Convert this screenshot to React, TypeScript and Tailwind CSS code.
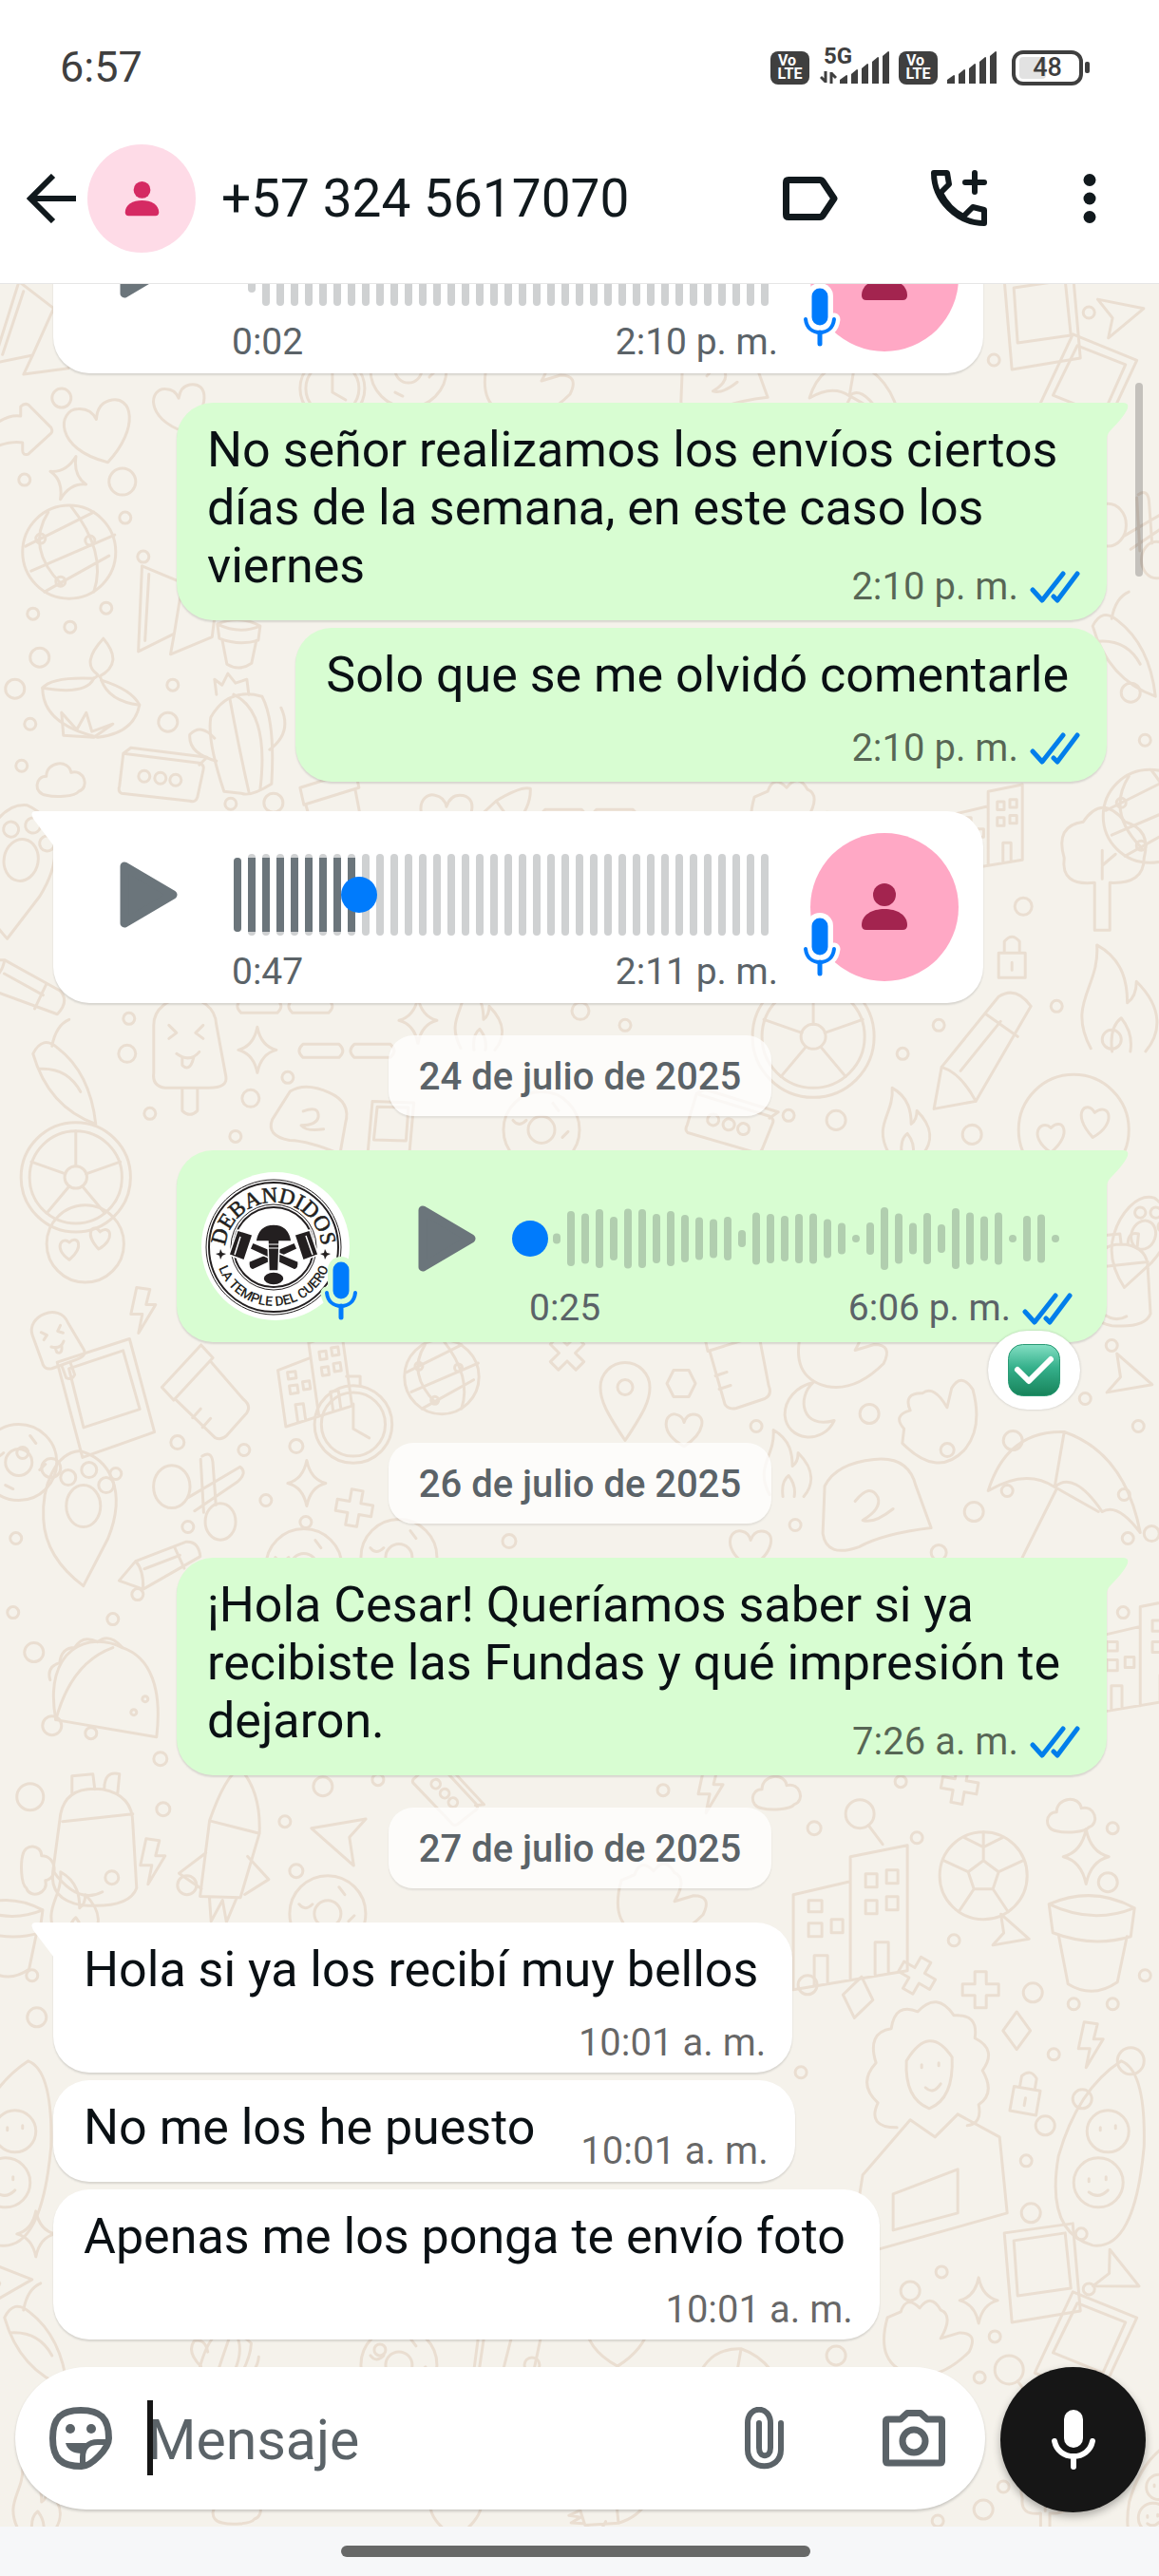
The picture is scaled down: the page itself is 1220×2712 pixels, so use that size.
import React from "react";

type Side = "in" | "out";

interface VoiceNote {
  side: Side;
  duration: string;
  time: string;
  progress: number;
  bars: number[];
  tail?: boolean;
}

const LINE = "#eaded1";

// Bar heights of the three voice notes
const flatBars = Array.from({ length: 36 }, () => 86);
const firstBars = [8, 58, ...flatBars];
const secondBars = [78, 86, ...flatBars];
const replyBars = [
  8, 8, 11, 58, 53, 62, 46, 63, 62, 52, 58, 50, 45, 41, 46, 18, 55, 52, 48, 52,
  53, 41, 33, 8, 34, 66, 53, 33, 54, 30, 64, 55, 47, 55, 8, 48, 51, 8,
];

/* ---------- Icons ---------- */

function Ticks() {
  return (
    <svg width="53" height="34" viewBox="0 0 53 34" fill="none" stroke="#027eeb" strokeWidth="5" strokeLinecap="round" strokeLinejoin="round">
      <path d="M3 20 13 31 35 3" />
      <path d="M25 27 29 31 50 3" />
    </svg>
  );
}

function Tail({ side }: { side: Side }) {
  return side === "out" ? (
    <svg className="absolute top-0 -right-[23px]" width="24" height="38" viewBox="0 0 24 38">
      <path d="M0 0H18Q26 0 22 8Q18 16 6 28Q1 33 1 38H0Z" fill="#d8fdd2" />
    </svg>
  ) : (
    <svg className="absolute top-0 -left-[23px]" width="24" height="38" viewBox="0 0 24 38">
      <path d="M24 0H5Q-2 0 2 8L24 37Z" fill="#fff" />
    </svg>
  );
}

function PlayIcon() {
  return (
    <svg width="61" height="70" viewBox="0 0 61 70">
      <path d="M5 5 56 35 5 65Z" fill="#6b757b" stroke="#6b757b" strokeWidth="9" strokeLinejoin="round" />
    </svg>
  );
}

function VoiceMic({ halo }: { halo: string }) {
  return (
    <svg width="48" height="74" viewBox="-6 -6 48 74" fill="none" strokeLinecap="round">
      <g stroke={halo}>
        <path d="M18 9V31" strokeWidth="28" />
        <path d="M3 33C4 42 10 47 18 47S32 42 33 33" strokeWidth="13" />
      </g>
      <g stroke="#007bfc">
        <path d="M18 9V31" strokeWidth="17" />
        <path d="M3 33C4 42 10 47 18 47S32 42 33 33" strokeWidth="4" />
        <path d="M18 47V59" strokeWidth="5" />
      </g>
    </svg>
  );
}

function Person({ className, width, height }: { className: string; width: number; height: number }) {
  return (
    <svg className={className} width={width} height={height} viewBox="0 0 48 50" fill="currentColor">
      <circle cx="24" cy="12" r="12" />
      <path d="M0 44C0 33 11 27 24 27S48 33 48 44Q48 49 43 49H5Q0 49 0 44Z" />
    </svg>
  );
}

function BrandLogo() {
  return (
    <svg width="156" height="156" viewBox="0 0 156 156">
      <defs>
        <path id="arcTop" d="M25 83A51 51 0 1 1 127 83" />
        <path id="arcBottom" d="M15 90A62 62 0 0 0 137 90" />
      </defs>
      <circle cx="78" cy="78" r="78" fill="#fff" />
      <g fill="none" stroke="#231f20">
        <circle cx="76" cy="79" r="71" strokeWidth="1" />
        <circle cx="76" cy="79" r="68" strokeWidth="2" />
        <circle cx="76" cy="79" r="45" strokeWidth="1" />
        <circle cx="76" cy="79" r="42" strokeWidth="2" />
      </g>
      <g fill="#231f20" textAnchor="middle">
        <text className="font-['Liberation_Serif']" fontSize="23" stroke="#231f20" strokeWidth="0.6">
          <textPath href="#arcTop" startOffset="50%">DEBANDIDOS</textPath>
        </text>
        <text className="font-['Roboto'] font-medium" fontSize="14">
          <textPath href="#arcBottom" startOffset="50%">LA TEMPLE DEL CUERO</textPath>
        </text>
      </g>
      <path d="M20 81l2 4 4 1-4 2-2 4-1-4-4-2 4-1zM130 81l2 4 4 1-4 2-2 4-1-4-4-2 4-1z" fill="#231f20" />
      {/* crossed mallets behind the trimming knife */}
      <g fill="#231f20" stroke="#fff" strokeWidth="1.5">
        <path d="M50 94 98 74l3 7-47 22q-5-1-4-9Z" />
        <path d="M102 94 54 74l-3 7 47 22q5-1 4-9Z" />
        <path d="M38 61 54 66 45 93 29 87Z" />
        <path d="M114 61 98 66 107 93 123 87Z" />
        <path d="M57 73C59 60 67 55 76 55S93 60 95 73H82L81 104H71L70 73Z" />
        <ellipse cx="76" cy="112" rx="11" ry="7" />
      </g>
      <path d="M41 68 35 87M110 67 117 87" stroke="#fff" strokeWidth="1.5" />
      <path d="M70 76H82M71 80H81" stroke="#fff" strokeWidth="1" />
    </svg>
  );
}

function VolteBadge() {
  return (
    <span className="flex h-[35px] w-[41px] flex-col items-center justify-center rounded-[8px] bg-[#3f3f3f] text-[16px] leading-[14px] font-bold text-white">
      <span className="pr-1.5">Vo</span>
      <span>LTE</span>
    </span>
  );
}

function SignalBars() {
  return (
    <svg width="53" height="34" viewBox="0 0 53 34" fill="#3f3f3f">
      {[9, 15, 21, 28, 34].map((h, i) => (
        <path key={h} d={`M${i * 11 + (i ? 1 : 0)} ${34 - h + 5}L${i * 11 + 7} ${34 - h}q1 0 1 1V34h-${i ? 7 : 8}z`} />
      ))}
    </svg>
  );
}

/* ---------- Wallpaper ---------- */

const motifs: Record<string, React.ReactNode> = {
  sparkle: <path d="M0-24Q4-4 20 0Q4 4 0 24Q-4 4-20 0Q-4-4 0-24Z" />,
  plus: <path d="M-6-19H6V-6H19V6H6V19H-6V6H-19V-6H-6Z" />,
  cloud: <path d="M-16 16C-30 14-28-4-16-4C-16-20 8-22 10-8C24-12 30 8 18 12C14 18-8 18-16 16Z" />,
  bolt: <path d="M-6-24 8-22 4-6 14-6-4 24 0 4-12 4Z" />,
  diamond: <path d="M0-22 16 0 0 22-16 0Z" />,
  plane: <path d="M-22-18 24 0-18 24-10 4Z" />,
  arrow: <path d="M-30-8Q-16-18-4-16V-26Q0-30 4-28L28-4Q30 0 28 2L4 24Q-2 26-2 20V12Q-14 10-30 16" />,
  globe: (
    <>
      <circle r="49" />
      <path d="M-46-6 26-42M-40 20 48-18M-26 42 42 4M-22-42Q-46-4-8 34M2-48Q40 0 26 42" />
      <circle cx="-30" cy="-14" r="5" />
      <circle cx="22" cy="-12" r="5" />
      <circle cx="-9" cy="31" r="5" />
    </>
  ),
  heart: <path d="M0 26C-40 4-28-26-12-22Q-2-20 0-10Q4-22 14-22C34-22 32 6 0 26Z" />,
  diya: (
    <>
      <path d="M-50-10Q-40-22 4-20Q8-22 8-24Q-10-36 14-62Q36-36 10-22Q12-20 12-18Q44-8 52 8Q46 38 8 42Q-50 28-50-10Z" />
      <path d="M-50-10Q-4-2 4-20M12-18Q20 4 52 8M-30 16-28 40 4 42 24 28 2 36-4 16-14 34Z" />
    </>
  ),
  book: <path d="M-40-52-36 38 0 16-2 38 40 16 42-44 4-38ZM4-38 0 16M-32-44-30 26" />,
  cactus: (
    <>
      <path d="M-26 54Q-44 0-40-24Q-22-56 14-46Q28-20 24 46Q2 60-8 56ZM-20-44Q-10 10 0 54M-16-48Q22-30 12 52" />
      <path d="M-34 22Q-64 14-62-6Q-50-18-36-2M22 10Q46-8 34-34M-34-48-36-64-28-58-22-70-14-60-2-64 0-48" />
    </>
  ),
  cassette: (
    <>
      <path d="M-42-26 38-16Q44-14 42-8L36 20Q34 26 28 24L-44 16Q-48 14-46 8L-42-26-34-32 46-22 38-14" />
      <circle cx="-20" cy="-2" r="6" />
      <circle cx="-3" cy="0" r="6" />
      <circle cx="13" cy="2" r="6" />
    </>
  ),
  popsicle: (
    <>
      <path d="M-38 30V-20C-38-56 26-60 28-20L38 34Q40 46 20 46H-26Q-40 44-38 30ZM-8 46V70Q0 78 8 70V46" />
      <path d="M-22-20-14-12-22-6M14-20 6-12 14-6M-14 10Q0 20 10 8M-8 14V22Q0 30 4 14" />
    </>
  ),
  wheel: (
    <>
      <circle r="64" />
      <circle r="54" />
      <circle r="13" />
      <path d="M-12-4-52-18M12-4 52-18M-8 11-34 42M8 11 34 42M0-13V-54" />
    </>
  ),
  pencil: <path d="M-52 58-44 14 16-60Q34-72 50-50L-8 50ZM-44 14Q-24 20-8 50M2-42 36-18M-24 18 18-34" />,
  hearts: (
    <>
      <circle r="58" />
      <path d="M-24 24C-50 6-34-12-24-2C-12-14 0 4-24 24ZM20 8C-4-18 14-32 22-18C38-30 46-6 20 8Z" />
    </>
  ),
  flame: <path d="M-20 34C-36 4-14-6-16-34C2-24 4-8 4 4Q10 0 10-10C28 8 26 24 16 36M-6 36Q-8 20 0 14Q8 24 6 36" />,
  chili: <path d="M-40-20Q-30-40-14-26Q20 0 26 54Q-24 36-40-20ZM-20-28Q-16-50-2-56M-34-4Q-4-6 10 20" />,
  scissors: (
    <>
      <ellipse cx="-30" cy="-8" rx="24" ry="28" />
      <ellipse cx="34" cy="38" rx="20" ry="24" />
      <path d="M-8 6 60-34Q70-26 56-14L0 24M10-48Q22-56 24-40L28 16M8-44 12 26" />
    </>
  ),
  paw: (
    <>
      <path d="M-42 0C-44-34-30-70-4-72C28-64 46-30 26 20L0 70Q-40 40-42 0Z" />
      <ellipse cy="-14" rx="18" ry="22" />
      <circle cx="-16" cy="-44" r="8" />
      <circle cx="6" cy="-52" r="8" />
      <circle cx="24" cy="-36" r="8" />
    </>
  ),
  timer: (
    <>
      <circle r="34" />
      <circle r="28" />
      <path d="M-6-42H6V-34M0-18V4L14 12" />
    </>
  ),
  patch: <path d="M-52-20Q-40-44 0-48Q36-52 44-20L60 24Q10 30-16 44Q-50 56-54 30ZM-20-4Q-4-24 4-8Q8 4-12 16Q0 20 20 4" />,
  taco: (
    <>
      <path d="M-56 36C-70-40-20-58 14-40C44-30 56 4 50 54Z" />
      <path d="M-56 36Q-40-24 4-40M-62-6Q-66-20-52-24Q-50-40-36-40Q-28-54-12-46Q0-56 14-40" />
      <circle cx="26" cy="28" r="3" />
      <circle cx="38" cy="14" r="3" />
    </>
  ),
  umbrella: <path d="M-80 0Q-60-64 0-62Q64-40 80 44Q56 12 40 22Q10-22-10-4Q-40-24-80 0ZM-8-2-44 70Q-30 92-14 78M0-62-10-4 36 22" />,
  backpack: <path d="M-36-30Q-30-60 8-56Q40-50 40-20L44 48Q36 70-14 66Q-48 60-44 30ZM-34-22 40-30M-24-52V-70L-2-72 0-56M-44 30Q-18 66 8 52M10-56Q10-76 26-72L24-52" />,
  rocket: <path d="M-14 60-18-20Q-10-70 4-80Q30-60 36-16L28 54ZM-18-20 36-16M28 10 54 30 32 50M-16 14-40 40-14 52M-4 60 2 84 10 60 18 82 24 56" />,
  glass: (
    <>
      <circle r="15" />
      <path d="M9 12 24 32" />
    </>
  ),
  building: <path d="M-60-20 0-34V-60L60-72V60L-60 80ZM0-34V70M-44 10h14v14h-14zM-20 6h12v14h-12zM-44-14h14v12h-14zM16-42h12v14H16zM38-46h12v14H38zM16-14h12v14H16zM38-18h12v14H38zM-38 76V44h14v30M26 64V30h14v32" />,
  ball: (
    <>
      <circle r="46" />
      <path d="M0-16 16-4 10 14H-10L-16-4ZM0-16V-46M16-4 42-16M10 14 26 38M-10 14-26 38M-16-4-42-16M-20-40 0-30 20-40" />
    </>
  ),
  pot: <path d="M-46-40Q0-60 44-36L40-6Q0 6-42-10ZM-36-8-26 44Q0 60 26 42L36-6M-46-40Q0-18 44-36" />,
  polaroid: <path d="M-38-44 34-54 42 38-30 50ZM-28-36 26-44 32 14-24 22Z" />,
  pod: (
    <>
      <path d="M30-110Q56-100 54-20Q44 90 0 84Q-50 70-36-10Q-16-80 30-110Z" />
      <circle cx="6" cy="18" r="26" />
      <circle cx="16" cy="-36" r="22" />
      <path d="M-4 14v3M14 12v3M-4 28Q6 36 16 26M8-40v3M24-42v3" />
    </>
  ),
  girl: (
    <>
      <path d="M-34 60Q-66 60-54 34Q-76 14-56-8Q-66-40-40-44Q-36-72-12-62Q8-84 26-58Q52-60 48-34Q72-22 56 0Q70 24 52 36Q56 56 40 58" />
      <path d="M-24-10Q-26 30 0 40Q26 30 24-14Q0-50-24-10ZM-8-6v3M10-8v3M-4 18Q4 26 12 14" />
      <path d="M-20 52-70 110-78 160M30 46 74 70 82 150-60 190M-20 52 6 70 30 46M-38 130 30 104V150L-38 168Z" />
    </>
  ),
  pin: (
    <>
      <path d="M0 42C-20 12-26 0-26-14A26 26 0 0 1 26-14C26 0 20 12 0 42Z" />
      <circle cy="-14" r="8" />
    </>
  ),
  jar: <path d="M-34-30 24-48 28-30-30-12ZM-28-12-12 44Q-8 50 0 48L30 38Q38 34 34 24L24-28M-22 14-10 10M-18 28-6 24" />,
  moon: <path d="M4-30C-14-14-8 20 26 10C14 36-24 32-26 4C-26-12-14-26 4-30Z" />,
  hand: <path d="M-46-20Q-60 30-20 40Q10 46 40 16Q50-4 30-4L10 2Q24-22 10-28Q0-46-12-30Q-26-44-32-26Z" />,
  hex: <path d="M-8-14 8-14 15 0 8 14-8 14-15 0Z" />,
  dashes: <path d="M-46-7H-8Q0 0-8 7H-46Q-54 0-46-7ZM8-7H46Q54 0 46 7H8Q0 0 8-7Z" />,
  tree: <path d="M-8 60V10Q-44 14-40-16Q-50-50-20-54Q0-84 24-54Q52-46 44-16Q44 12 8 10V60M-8 60H8M0 6V-24M0-8 14-20" />,
  lock: <path d="M-14-6H14V20H-14ZM-8-6V-18Q0-28 8-18V-6M0 4V12" />,
  donut: (
    <>
      <circle r="40" />
      <circle r="14" />
      <path d="M-30-10Q-24-2-16-10M12-28 18-20M22 8 28 2M-14 24-6 28" />
    </>
  ),
};

const doodles: [string, number, number, number?, number?][] = [
  // name, x, y, rotation, scale
  ["book", 40, 60, 20], ["heart", 190, 130, -10], ["polaroid", 1095, 40], ["polaroid", 1140, 110, 30], ["plane", 1180, 30, -10],
  ["arrow", 26, 155], ["heart", 105, 155, -15, 1.3], ["sparkle", 72, 204, 20], ["globe", 73, 282], ["diya", 95, 435],
  ["book", 185, 352, 5], ["cactus", 262, 480], ["cassette", 172, 520], ["cloud", 65, 522], ["pot", 252, 378, 0, 0.5],
  ["timer", 350, 110], ["donut", 430, 90], ["umbrella", 900, 120, 0, 0.6], ["hand", 560, 100], ["patch", 760, 100, 0, 0.8],
  ["scissors", 1190, 260, 0, 0.8], ["chili", 1190, 380], ["globe", 1210, 560],
  ["jar", 350, 560], ["heart", 470, 560], ["rocket", 520, 560, 50, 0.6], ["dashes", 620, 560], ["hand", 840, 560], ["building", 1040, 570, 0, 0.6],
  ["tree", 1160, 620], ["lock", 1065, 710], ["paw", 20, 620, 10], ["pencil", 20, 740, 80, 0.7], ["flame", 1180, 750, 0, 1.6],
  ["popsicle", 200, 800], ["sparkle", 271, 806], ["dashes", 365, 807], ["chili", 75, 830], ["wheel", 856, 792], ["pencil", 1035, 810],
  ["dashes", 300, 760], ["flame", 505, 770], ["sparkle", 440, 775], ["hearts", 1130, 890], ["flame", 955, 880], ["patch", 330, 880, 30, 0.7],
  ["wheel", 80, 940, 0, 0.9], ["polaroid", 410, 890, 10, 0.6], ["cassette", 770, 885, 10], ["donut", 570, 890], ["paw", 1200, 1010, 20, 0.7],
  ["hearts", 90, 1010, 0, 0.7], ["bolt", 150, 1080], ["popsicle", 60, 1110, -20, 0.6],
  ["polaroid", 110, 1175, -10, 1.1], ["donut", 20, 1240], ["jar", 215, 1170, -30], ["building", 330, 1150, -8, 0.6], ["timer", 372, 1200, 0, 1.2],
  ["globe", 465, 1150, 0, 0.8], ["plus", 597, 1125, 45], ["pin", 658, 1175], ["hex", 717, 1157], ["jar", 775, 1135], ["moon", 852, 1186],
  ["heart", 720, 1205, 0, 0.7], ["hand", 890, 1120], ["hand", 990, 1190, -60], ["plane", 1190, 1150, 20], ["backpack", 1180, 1050, 0, 0.7],
  ["scissors", 205, 1272, 0, 0.8], ["paw", 88, 1300], ["sparkle", 323, 1262], ["plus", 373, 1288, 10], ["patch", 920, 1285], ["umbrella", 1120, 1270],
  ["pencil", 170, 1350, 30, 0.6], ["donut", 320, 1350], ["donut", 420, 1340], ["heart", 790, 1330, 0, 0.8], ["flame", 830, 1240],
  ["taco", 115, 1475], ["building", 1200, 1440, 0, 0.8], ["backpack", 100, 1640], ["rocket", 235, 1640, 10], ["cloud", 818, 1588], ["cloud", 1128, 1612],
  ["bolt", 747, 1585], ["bolt", 160, 1660], ["glass", 905, 1610], ["plane", 355, 1635, 200, 1.2], ["cassette", 470, 1590, 40, 0.8], ["sparkle", 1143, 1655, 0, 1.2],
  ["ball", 1035, 1675], ["plus", 1010, 1580, 10], ["building", 895, 1715], ["cloud", 40, 1670, 90], ["flame", 80, 1705], ["donut", 345, 1715], ["hand", 700, 1700],
  ["pot", 1150, 1745], ["plane", 1065, 1735, 20, 0.8], ["plus", 965, 1780, 30], ["plus", 1032, 1795], ["diamond", 903, 1803, 10], ["diamond", 1070, 1838, 0, 0.9],
  ["bolt", 1147, 1853], ["girl", 978, 1880], ["lock", 1080, 1905, 10], ["pod", 1150, 1980], ["pod", 0, 1980], ["polaroid", 1095, 2095], ["polaroid", 1140, 2170, 30],
  ["sparkle", 1030, 2122], ["plane", 1178, 2095, 30], ["sparkle", 38, 2052], ["plane", 10, 2100], ["pot", 10, 1740, 0, 0.8], ["chili", 45, 2160], ["hand", 980, 2160],
  ["cactus", 240, 2190, 30, 0.7], ["donut", 420, 2190], ["book", 530, 2190, 10, 0.8], ["heart", 650, 2160, 0, 1.2], ["umbrella", 780, 2210, 0, 0.6], ["glass", 1062, 2195],
  ["flame", 40, 2330], ["cloud", 250, 2340], ["heart", 480, 2345], ["rocket", 640, 2340, 80, 0.5], ["pod", 1210, 2340, 0, 0.6], ["tree", 1100, 2340, 0, 0.6],
];

const dots: [number, number, number][] = [
  [26, 206, 6], [129, 208, 14], [132, 246, 6], [151, 287, 6], [35, 347, 6], [112, 341, 6], [74, 361, 6], [42, 393, 10], [16, 426, 10], [32, 463, 6], [23, 507, 6],
  [182, 422, 6], [177, 461, 10], [243, 547, 6], [288, 546, 10], [65, 120, 10], [1146, 30, 6], [1046, 80, 6], [1190, 430, 10], [1205, 480, 6],
  [136, 773, 6], [134, 810, 9], [303, 835, 6], [264, 857, 9], [158, 873, 6], [248, 897, 6], [611, 765, 9], [658, 780, 6], [988, 780, 6], [950, 810, 6],
  [1077, 655, 9], [1112, 760, 6], [1170, 795, 10], [880, 880, 10], [830, 875, 6], [1023, 895, 10],
  [1060, 1270, 6], [1183, 1274, 6], [1212, 1315, 8], [1079, 1155, 12], [1066, 1217, 10], [915, 1189, 10], [796, 1202, 6], [1142, 1173, 6], [1198, 1202, 6], [1170, 1117, 6],
  [24, 1230, 6], [54, 1246, 10], [122, 1252, 6], [187, 1219, 7], [257, 1227, 6], [312, 1223, 7], [280, 1280, 6], [198, 1308, 6], [322, 1303, 6], [17, 1320, 6],
  [997, 1227, 7], [837, 1306, 6], [536, 1323, 7], [1025, 1292, 10], [1187, 1320, 6], [988, 1335, 8],
  [36, 1440, 10], [14, 1398, 6], [119, 1405, 6], [145, 1379, 6], [55, 1517, 10], [96, 1525, 6], [1182, 1398, 6], [32, 1592, 14], [169, 1552, 7], [172, 1605, 7],
  [340, 1581, 10], [398, 1574, 6], [300, 1618, 6], [197, 1685, 10], [118, 1677, 7], [312, 1670, 7], [857, 1625, 7], [965, 1635, 6], [948, 1576, 6], [1171, 1625, 6], [1166, 1682, 10],
  [698, 1585, 6], [1004, 1743, 6], [34, 1780, 6], [39, 1824, 10], [850, 1790, 10], [1087, 1798, 10], [1130, 1810, 6], [1171, 1810, 6], [1205, 1780, 6],
  [1109, 1863, 6], [843, 1882, 6], [1190, 1870, 14], [1139, 1910, 10], [1100, 1938, 10], [1080, 1975, 6], [1085, 2030, 10], [1138, 2052, 6], [991, 2092, 6], [958, 2112, 10], [1146, 2110, 6], [1047, 2160, 6],
  [400, 2174, 6], [1031, 2203, 6], [1056, 2318, 6], [1035, 2342, 10], [987, 2354, 6], [560, 2190, 8], [880, 2180, 10],
];

function Wallpaper() {
  return (
    <svg className="absolute inset-0 size-full" viewBox="0 0 1220 2360" preserveAspectRatio="xMidYMax slice" fill="none" stroke={LINE} strokeLinejoin="round" strokeLinecap="round" aria-hidden="true">
      {doodles.map(([name, x, y, rot = 0, scale = 1], i) => (
        <g key={i} transform={`translate(${x} ${y}) rotate(${rot}) scale(${scale})`} strokeWidth={3 / scale}>
          {motifs[name]}
        </g>
      ))}
      {dots.map(([cx, cy, r], i) => (
        <circle key={i} cx={cx} cy={cy} r={r} strokeWidth="3" />
      ))}
    </svg>
  );
}

/* ---------- Messages ---------- */

function Time({ children, ticks }: { children: string; ticks?: boolean }) {
  return (
    <span className="flex items-center gap-3 text-[40px] leading-[46px] whitespace-nowrap text-black/60">
      {children}
      {ticks && <Ticks />}
    </span>
  );
}

interface MessageProps {
  side: Side;
  text: string;
  time: string;
  // where the time goes: on its own row, beside the text, or in the corner of the last line
  meta: "below" | "beside" | "corner";
  tail?: boolean;
}

const bubbleBase = "relative w-fit max-w-[979px] rounded-[38px] shadow-[0_2px_2px_rgba(0,0,0,0.12)]";

function Message({ side, text, time, meta, tail }: MessageProps) {
  const out = side === "out";
  const skin = out ? "self-end bg-[#d8fdd2]" : "self-start bg-white";
  const corner = tail ? (out ? "rounded-tr-none" : "rounded-tl-none") : "";
  const textStyle = "text-[52px] leading-[61px] text-[#0a1014]";

  return (
    <div className={`${bubbleBase} ${skin} ${corner}`}>
      {tail && <Tail side={side} />}
      {meta === "below" && (
        <div className={`flex flex-col pt-[19px] pr-7 pl-8 ${out ? "pb-3" : "pb-2"}`}>
          <p className={`${textStyle} ${out ? "pr-3" : "pr-2"}`}>{text}</p>
          <div className="mt-6 self-end">
            <Time ticks={out}>{time}</Time>
          </div>
        </div>
      )}
      {meta === "beside" && (
        <div className="flex items-end gap-12 pt-[19px] pr-7 pb-[9px] pl-8">
          <p className={`${textStyle} pb-[18px]`}>{text}</p>
          <Time ticks={out}>{time}</Time>
        </div>
      )}
      {meta === "corner" && (
        <div className={`${textStyle} flow-root pt-[19px] pr-7 pb-3 pl-8`}>
          {text}
          <div className="float-right mt-[30px]">
            <Time ticks={out}>{time}</Time>
          </div>
        </div>
      )}
    </div>
  );
}

function Waveform({ side, bars, progress }: { side: Side; bars: number[]; progress: number }) {
  const played = (progress / 1000) * 552 + 6;
  return (
    <svg className="absolute inset-y-0 left-[13px]" width="564" height="86" viewBox="0 0 564 86" strokeWidth="8">
      {bars.map((h, i) => {
        const x = i * 15 + 4;
        const done = progress > 0 && x < played;
        const inner = Math.min(h, 78);
        return (
          <g key={i}>
            <rect x={x - 4} y={43 - h / 2} width="8" height={h} rx="4" fill={side === "out" ? "#b1ceaf" : "#cfd1d2"} />
            {done && <rect x={x - 4} y={43 - inner / 2} width="8" height={inner} rx={i ? 0 : 4} fill="#6b757b" />}
          </g>
        );
      })}
    </svg>
  );
}

function Voice({ side, duration, time, progress, bars, tail }: VoiceNote) {
  const out = side === "out";
  const player = (
    <div className={out ? "w-[600px] pt-[27px]" : "w-[590px] pt-[22px]"}>
      <div className="relative h-[86px] w-[590px]">
        <Waveform side={side} bars={bars} progress={progress} />
        <input
          type="range"
          min={0}
          max={1000}
          defaultValue={progress}
          aria-label={`Mensaje de voz ${duration}`}
          className="relative block h-full w-full cursor-pointer appearance-none bg-transparent [&::-webkit-slider-thumb]:size-[38px] [&::-webkit-slider-thumb]:appearance-none [&::-webkit-slider-thumb]:rounded-full [&::-webkit-slider-thumb]:bg-[#007bfc]"
        />
      </div>
      <div className={`flex items-center justify-between text-[39px] leading-[45px] text-[#5b6368] ${out ? "mt-2 pr-[10px] pl-[18px]" : "mt-4 pr-1 pl-[11px]"}`}>
        <span>{duration}</span>
        <span className="flex items-center gap-3">
          {time}
          {out && <Ticks />}
        </span>
      </div>
    </div>
  );
  const play = (
    <button type="button" aria-label="Reproducir" className={`h-[70px] ${out ? "mt-[35px] mr-[38px] ml-[72px]" : "mt-[30px] mr-[46px] ml-[44px]"}`}>
      <PlayIcon />
    </button>
  );

  return (
    <div
      className={`relative flex h-[202px] w-[979px] max-w-full shrink-0 items-start rounded-[38px] px-[26px] pt-[23px] shadow-[0_2px_2px_rgba(0,0,0,0.12)] ${
        out ? "self-end bg-[#d8fdd2]" : "self-start bg-white"
      } ${tail ? (out ? "rounded-tr-none" : "rounded-tl-none") : ""}`}
    >
      {tail && <Tail side={side} />}
      {out && (
        <div className="relative size-[156px] shrink-0">
          <BrandLogo />
          <span className="absolute top-[88px] left-[123px]">
            <VoiceMic halo="#d8fdd2" />
          </span>
        </div>
      )}
      {play}
      {player}
      {!out && (
        <div className="relative ml-[30px] flex size-[156px] shrink-0 items-center justify-center rounded-full bg-[#ffa8c5]">
          <Person className="text-[#a3244f]" width={48} height={50} />
          <span className="absolute top-[83px] -left-[14px]">
            <VoiceMic halo="#fff" />
          </span>
        </div>
      )}
      {out && (
        <span className="absolute right-[28px] -bottom-[71px] flex h-[83px] w-[97px] items-center justify-center rounded-full bg-white shadow-[0_0_3px_rgba(0,0,0,0.2)]">
          <svg width="55" height="55" viewBox="0 0 55 55" role="img" aria-label="✅">
            <defs>
              <linearGradient id="check" x1="0" y1="0" x2="0" y2="1">
                <stop offset="0" stopColor="#84dfc4" />
                <stop offset="0.45" stopColor="#35b08b" />
                <stop offset="1" stopColor="#17835a" />
              </linearGradient>
            </defs>
            <rect x="0.5" y="0.5" width="54" height="54" rx="15" fill="url(#check)" stroke="#2a9a74" />
            <path d="M10 27 22 39 45 16" fill="none" stroke="#fff" strokeWidth="6" strokeLinecap="round" strokeLinejoin="round" />
          </svg>
        </span>
      )}
    </div>
  );
}

function DateChip({ children }: { children: string }) {
  return (
    <div className="mt-[34px] mb-[36px] self-center rounded-[26px] bg-white/75 px-8 pt-[3px] text-[40px] leading-[82px] font-medium text-[#5b6368] shadow-[0_2px_2px_rgba(0,0,0,0.08)]">
      {children}
    </div>
  );
}

/* ---------- Bars ---------- */

function StatusBar() {
  return (
    <div className="flex h-[142px] items-center justify-between pr-[73px] pl-[63px] text-[#3f3f3f]">
      <span className="text-[45px]">6:57</span>
      <div className="flex items-center">
        <VolteBadge />
        <div className="relative ml-[32px]">
          <SignalBars />
          <span className="absolute -top-1.5 -left-[17px] text-[24px] leading-[22px] font-bold">5G</span>
          <svg className="absolute bottom-0 -left-[21px]" width="18" height="13" viewBox="0 0 18 13" stroke="#3f3f3f" strokeWidth="3" fill="none">
            <path d="M6 0V12M6 11 1 6M12 13V1M12 2 17 7" />
          </svg>
        </div>
        <div className="mr-[10px] ml-[9px]">
          <VolteBadge />
        </div>
        <SignalBars />
        <div className="relative ml-[15px] flex h-[37px] w-[75px] items-center justify-center rounded-[12px] border-4 border-[#3f3f3f] text-[27px] leading-none font-medium">
          <span className="absolute inset-y-[3px] left-1 w-[28px] rounded-[4px] bg-[#e2e2e2]" />
          <span className="relative">48</span>
        </div>
        <span className="ml-0.5 h-3 w-[5px] rounded-[2px] bg-[#3f3f3f]" />
      </div>
    </div>
  );
}

function ChatHeader() {
  return (
    <div className="mb-[22px] flex h-[134px] items-center pr-[66px] pl-[28px] text-[#11191d]">
      <button type="button" aria-label="Atrás">
        <svg width="52" height="52" viewBox="0 0 52 52" fill="none" stroke="currentColor" strokeWidth="6">
          <path d="M52 26H5M28 2 4 26 28 50" />
        </svg>
      </button>
      <div className="ml-3 flex size-[114px] items-center justify-center rounded-full bg-[#fedbe7]">
        <Person className="text-[#d52a63]" width={37} height={37} />
      </div>
      <h1 className="ml-[27px] flex-1 text-[55px] leading-[64px]">+57 324 5617070</h1>
      <button type="button" aria-label="Etiquetar">
        <svg width="58" height="46" viewBox="0 0 58 46" fill="none" stroke="currentColor" strokeWidth="7" strokeLinejoin="round">
          <path d="M6 3.5H39Q41 3.5 42 5L54 23 42 41Q41 42.5 39 42.5H6Q3.5 42.5 3.5 40V6Q3.5 3.5 6 3.5Z" />
        </svg>
      </button>
      <button type="button" aria-label="Llamar" className="ml-[98px]">
        <svg width="60" height="60" viewBox="0 0 60 60" fill="none" stroke="currentColor" strokeWidth="6" strokeLinejoin="round" strokeLinecap="round">
          <path d="M3 3H17L19 15 10 24C16 36 24 44 34 49L44 39 56 42V56C28 56 3 32 3 3Z" />
          <path d="M46 3V23M36 13H56" />
        </svg>
      </button>
      <button type="button" aria-label="Más opciones" className="ml-[100px]">
        <svg width="14" height="52" viewBox="0 0 14 52" fill="currentColor">
          <circle cx="7" cy="6.5" r="6.5" />
          <circle cx="7" cy="26" r="6.5" />
          <circle cx="7" cy="45.5" r="6.5" />
        </svg>
      </button>
    </div>
  );
}

function Composer() {
  return (
    <form className="relative flex items-start gap-4 pt-[29px] pr-[14px] pb-[15px] pl-4" onSubmit={(e) => e.preventDefault()}>
      <div className="flex h-[150px] min-w-0 flex-1 items-center rounded-full bg-white pr-[42px] pl-9 text-[#5b6368] shadow-[0_2px_3px_rgba(0,0,0,0.18)]">
        <button type="button" aria-label="Stickers">
          <svg width="66" height="66" viewBox="0 0 66 66" fill="none" stroke="currentColor" strokeWidth="7" strokeLinejoin="round">
            <path d="M34 62.5C12 62.5 3.5 54 3.5 33S12 3.5 33 3.5 62.5 12 62.5 33C62.5 44 44 62.5 34 62.5Z" />
            <path d="M35 62V53C35 43 41 37 51 37H62" strokeWidth="6" />
            <path d="M17 38H42Q35 42 34 49 20 49 17 38Z" fill="currentColor" stroke="none" />
            <circle cx="22" cy="23" r="5" fill="currentColor" stroke="none" />
            <circle cx="44" cy="23" r="5" fill="currentColor" stroke="none" />
          </svg>
        </button>
        <div className="relative ml-[37px] min-w-0 flex-1">
          <input type="text" aria-label="Mensaje" placeholder="Mensaje" className="block h-[80px] w-full bg-transparent pt-1 text-[59px] text-[#11191d] outline-none placeholder:text-[#5b6368]" />
          <span className="absolute top-0 left-0 h-[79px] w-1.5 bg-[#161616]" />
        </div>
        <button type="button" aria-label="Adjuntar" className="mx-[2px]">
          <svg width="42" height="66" viewBox="0 0 42 66" fill="none" stroke="currentColor" strokeWidth="6" strokeLinecap="round">
            <path d="M38 17V45C38 68 3 68 3 45V17C3-2 27-2 27 17V43C27 54 15 54 15 43V17" />
          </svg>
        </button>
        <button type="button" aria-label="Cámara" className="ml-[101px]">
          <svg width="66" height="60" viewBox="0 0 66 60" fill="none" stroke="currentColor" strokeWidth="7" strokeLinejoin="round">
            <path d="M6 10H19L26 3.5H40L47 10H60Q62.5 10 62.5 12V54Q62.5 56 60 56H6Q3.5 56 3.5 54V12Q3.5 10 6 10Z" />
            <circle cx="33" cy="33" r="12" />
          </svg>
        </button>
      </div>
      <button type="button" aria-label="Grabar mensaje de voz" className="flex size-[153px] shrink-0 items-center justify-center rounded-full bg-[#161616] shadow-[0_4px_8px_rgba(0,0,0,0.3)]">
        <svg width="46" height="64" viewBox="0 0 46 64" fill="none" stroke="#fff" strokeLinecap="round">
          <path d="M23 10V30" strokeWidth="20" />
          <path d="M3 33C5 43 13 49 23 49S41 43 43 33M23 49V60" strokeWidth="6" />
        </svg>
      </button>
    </form>
  );
}

export default function App() {
  return (
    <div className="flex h-screen flex-col overflow-hidden bg-white font-['Roboto',sans-serif]">
      <header className="shrink-0 border-b border-[#e6e6e6]">
        <StatusBar />
        <ChatHeader />
      </header>

      <main className="relative flex min-h-0 flex-1 flex-col overflow-hidden bg-[#f5f2eb]">
        <Wallpaper />
        {/* Scroll position */}
        <span className="absolute top-[104px] right-[17px] h-[204px] w-2 rounded-full bg-black/20" />

        <div className="relative flex min-h-0 flex-1 flex-col justify-end pr-[55px] pl-[56px]">
          <Voice side="in" duration="0:02" time="2:10 p. m." progress={0} bars={firstBars} />
          <div className="mt-[31px] flex flex-col gap-2">
            <Message side="out" meta="corner" tail time="2:10 p. m." text="No señor realizamos los envíos ciertos días de la semana, en este caso los viernes" />
            <Message side="out" meta="below" time="2:10 p. m." text="Solo que se me olvidó comentarle" />
          </div>
          <div className="mt-[31px] flex flex-col">
            <Voice side="in" tail duration="0:47" time="2:11 p. m." progress={228} bars={secondBars} />
          </div>

          <DateChip>24 de julio de 2025</DateChip>
          <div className="mb-[72px] flex flex-col">
            <Voice side="out" tail duration="0:25" time="6:06 p. m." progress={0} bars={replyBars} />
          </div>

          <DateChip>26 de julio de 2025</DateChip>
          <Message side="out" meta="corner" tail time="7:26 a. m." text="¡Hola Cesar! Queríamos saber si ya recibiste las Fundas y qué impresión te dejaron." />

          <DateChip>27 de julio de 2025</DateChip>
          <div className="flex flex-col gap-2">
            <Message side="in" meta="below" tail time="10:01 a. m." text="Hola si ya los recibí muy bellos" />
            <Message side="in" meta="beside" time="10:01 a. m." text="No me los he puesto" />
            <Message side="in" meta="below" time="10:01 a. m." text="Apenas me los ponga te envío foto" />
          </div>
        </div>

        <Composer />
      </main>

      <footer className="flex h-[52px] shrink-0 items-center justify-center bg-[#f6f7f9] pr-2">
        <span className="h-3 w-[494px] rounded-full bg-[#676868]" />
      </footer>
    </div>
  );
}
